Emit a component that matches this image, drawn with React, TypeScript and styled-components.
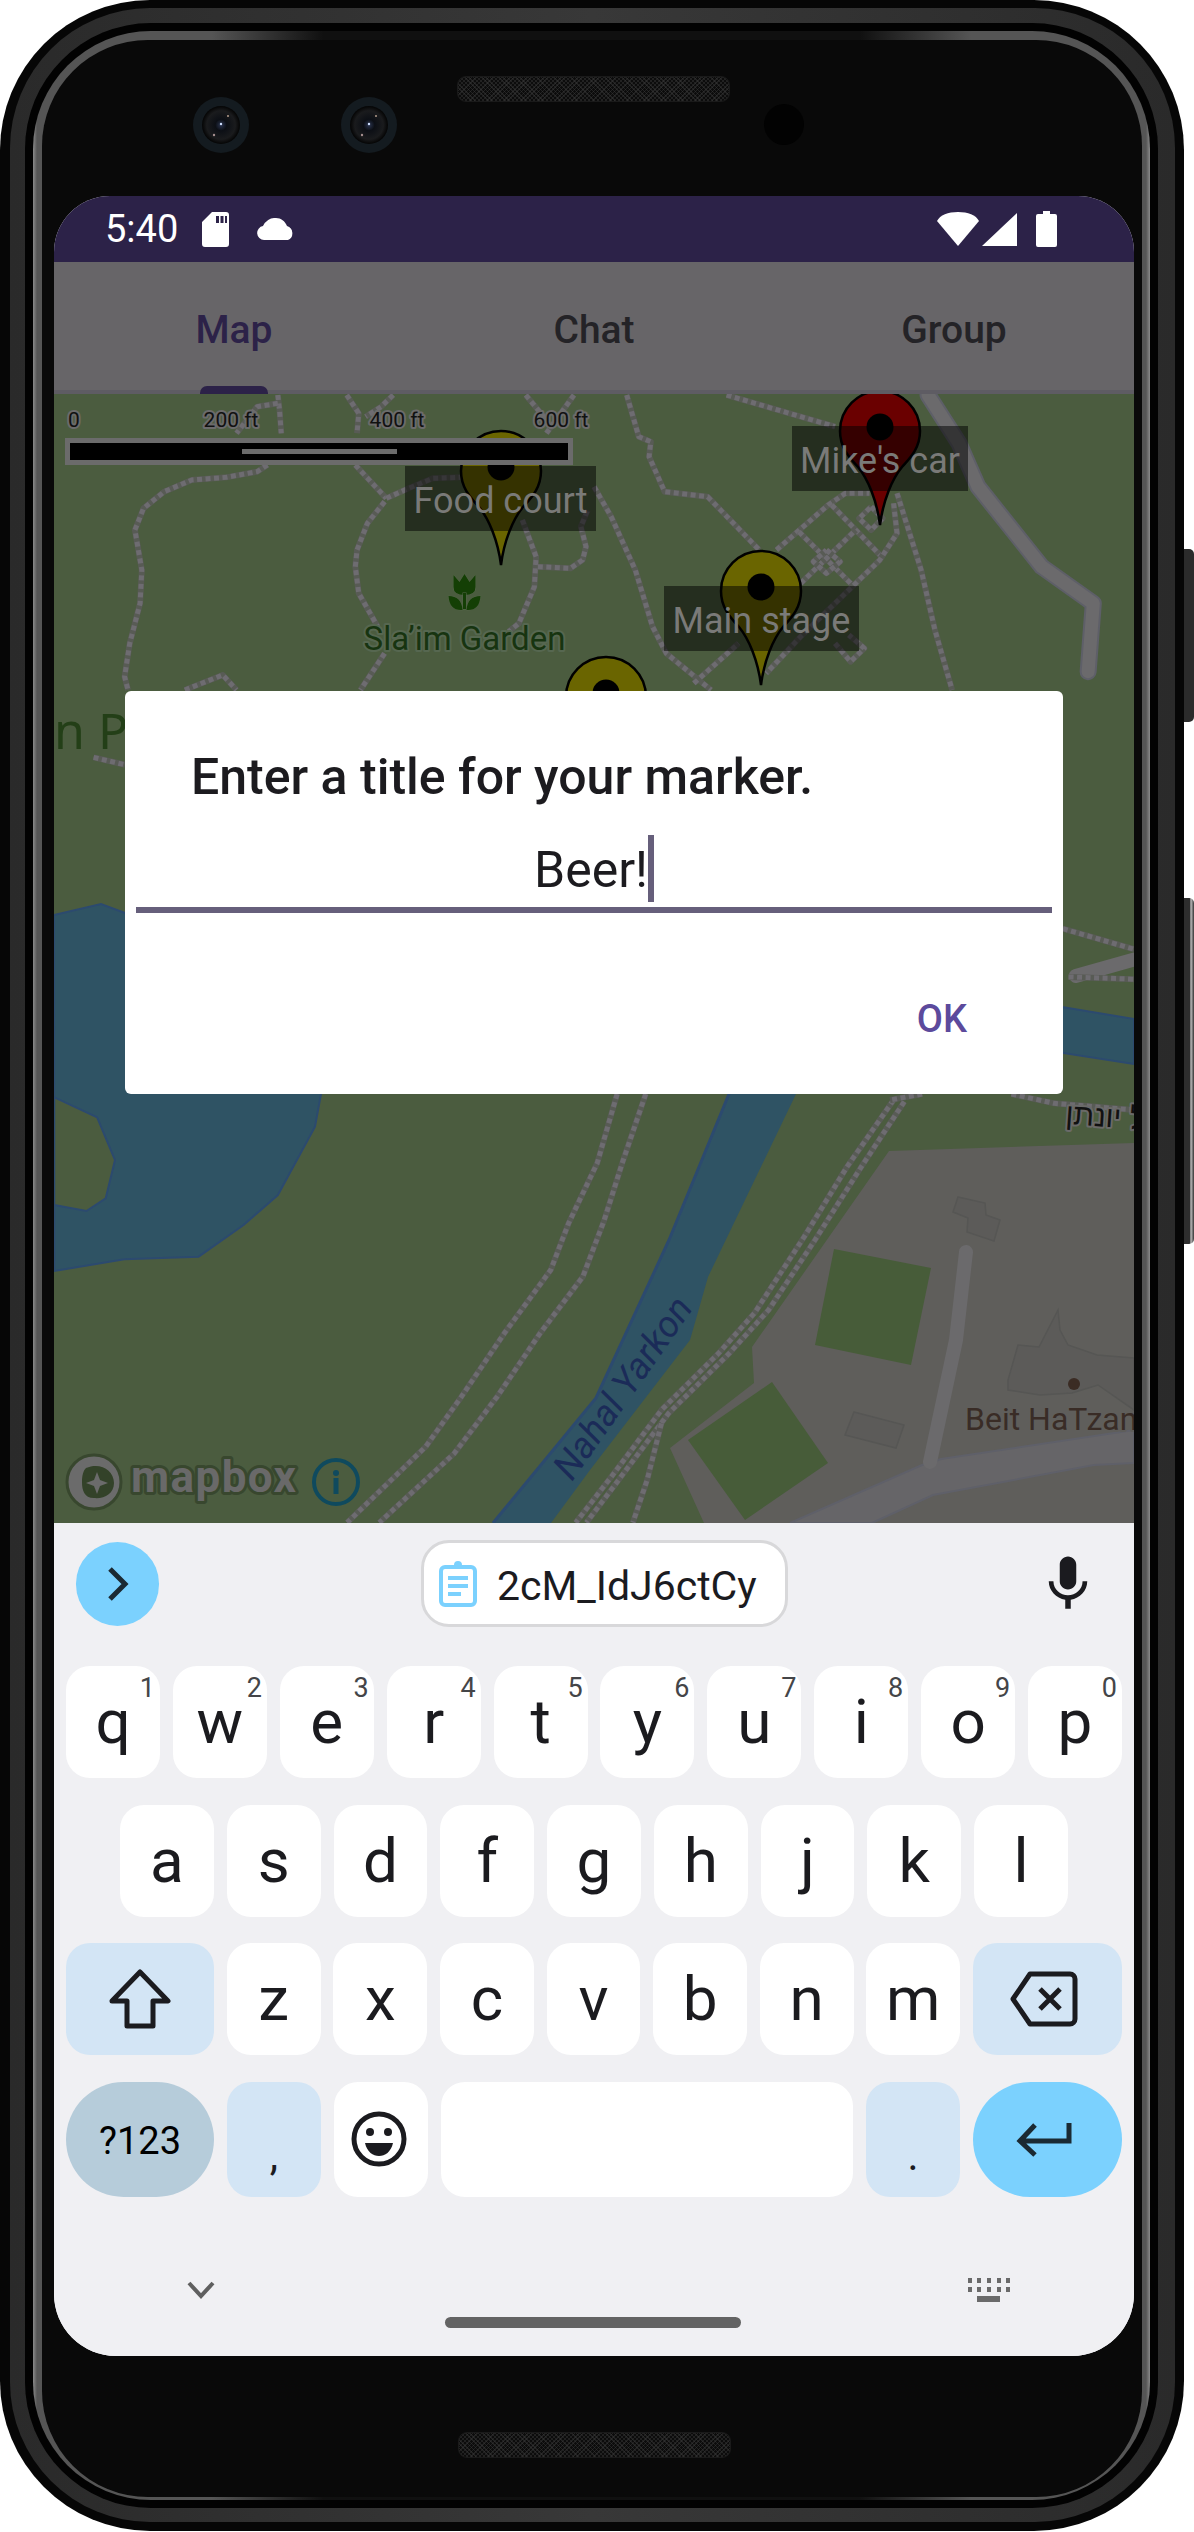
import React from "react";
import styled, { createGlobalStyle } from "styled-components";

const Global = createGlobalStyle`
  html, body { margin: 0; padding: 0; background: #fff; }
  body { font-family: Roboto, "Liberation Sans", sans-serif; overflow: hidden; }
`;

const Device = styled.div`
  position: relative;
  width: 1184px;
  height: 2531px;
`;
const Frame = styled.div`
  box-sizing: border-box;
  height: 100%;
  background: #060606;
  border-radius: 150px;
  padding: 8px 9px 9px 10px;
`;
const Band = styled.div`
  box-sizing: border-box;
  height: 100%;
  background: linear-gradient(90deg, #2a2a2a, #383838 50%, #2a2a2a);
  border-radius: 140px;
  padding: 15px 17px 14px 15px;
`;
const Groove = styled.div`
  box-sizing: border-box;
  height: 100%;
  background: #020202;
  border-radius: 126px;
  padding: 8px;
`;
const Bevel = styled.div`
  box-sizing: border-box;
  height: 100%;
  background:
    linear-gradient(90deg, transparent 16%, #101010 26%, #101010 74%, transparent 84%) top / 100% 14px no-repeat,
    linear-gradient(90deg, transparent 16%, #101010 26%, #101010 74%, transparent 84%) bottom / 100% 14px no-repeat,
    linear-gradient(90deg, #8a8a8a 0, #555 4px, #555 calc(100% - 4px), #8a8a8a 100%);
  border-radius: 118px;
  padding: 9px 8px 3px 9px;
`;
const Bezel = styled.div`
  box-sizing: border-box;
  height: 100%;
  background: #090909;
  border-radius: 106px;
  padding: 0 8px 0 12px;
  display: flex;
  flex-direction: column;
`;
const TopBezel = styled.div`
  height: 156px;
  display: flex;
  align-items: flex-start;
  padding-left: 139px;
`;
const CameraLens = styled.svg<{ $gap: number }>`
  width: 56px;
  height: 56px;
  margin-top: 57px;
  margin-left: ${(p) => p.$gap}px;
  flex: none;
`;
const Speaker = styled.div<{ $top?: number; $left?: number }>`
  width: 273px;
  height: 26px;
  box-sizing: border-box;
  flex: none;
  margin-top: ${(p) => p.$top ?? 0}px;
  margin-left: ${(p) => p.$left ?? 0}px;
  border: 1px solid #1a1a1a;
  border-radius: 9px;
  background:
    repeating-linear-gradient(45deg, rgba(60, 60, 60, 0.45) 0 1px, transparent 1px 3px),
    repeating-linear-gradient(-45deg, rgba(60, 60, 60, 0.45) 0 1px, transparent 1px 3px),
    #0c0c0c;
`;
const Sensor = styled.div`
  width: 40px;
  height: 41px;
  margin: 64px 0 0 34px;
  border-radius: 50%;
  background: #020202;
  flex: none;
`;
const BottomBezel = styled.div`
  flex: 1;
  display: flex;
  padding: 76px 0 0 404px;
`;
const SideKey = styled.div<{ $top: number; $height: number; $shine?: boolean }>`
  position: absolute;
  left: 1184px;
  top: ${(p) => p.$top}px;
  width: 10px;
  height: ${(p) => p.$height}px;
  border-radius: 0 5px 5px 0;
  background: ${(p) => (p.$shine ? "linear-gradient(90deg, #2e2e2e 0 55%, #bbb 70%, #333 100%)" : "#2b2b2b")};
`;

const Screen = styled.div`
  position: relative;
  height: 2160px;
  flex: none;
  overflow: hidden;
  border-radius: 56px 56px 62px 62px;
  display: flex;
  flex-direction: column;
  background: #f0f0f3;
`;
const StatusBar = styled.div`
  height: 66px;
  flex: none;
  background: #2c2248;
  display: flex;
  align-items: center;
  padding: 0 77px 0 51px;
  color: #fff;
`;
const Clock = styled.span`
  font-size: 38px;
  line-height: 1;
  width: 97px;
`;
const StatusSpacer = styled.div`
  flex: 1;
`;
const StatusIcon = styled.svg<{ $gap?: number }>`
  display: block;
  flex: none;
  margin-left: ${(p) => p.$gap ?? 0}px;
`;
const Tabs = styled.div`
  height: 132px;
  flex: none;
  box-sizing: border-box;
  background: #676568;
  border-bottom: 4px solid #5e5c63;
  display: grid;
  grid-template-columns: repeat(3, 1fr);
`;
const Tab = styled.div<{ $active?: boolean }>`
  position: relative;
  display: flex;
  align-items: center;
  justify-content: center;
  box-sizing: border-box;
  font-size: 39px;
  font-weight: 500;
  padding-top: 8px;
  color: ${(p) => (p.$active ? "#2c2248" : "#242327")};
`;
const TabIndicator = styled.div`
  position: absolute;
  bottom: -4px;
  left: 146px;
  width: 68px;
  height: 8px;
  border-radius: 7px 7px 0 0;
  background: #2c2248;
`;
const MapArea = styled.div`
  position: relative;
  height: 1129px;
  flex: none;
  overflow: hidden;
  background: #4b5c3f;
`;
const MapSvg = styled.svg`
  display: block;
  width: 100%;
  height: 100%;
`;
const Road = styled.polyline<{ $w: number; $c: string }>`
  fill: none;
  stroke: ${(p) => p.$c};
  stroke-width: ${(p) => p.$w}px;
  stroke-linecap: round;
  stroke-linejoin: round;
`;
const Trail = styled.polyline<{ $rim?: boolean }>`
  fill: none;
  stroke: ${(p) => (p.$rim ? "#585b55" : "#6e6c71")};
  stroke-width: ${(p) => (p.$rim ? 6 : 5)}px;
  stroke-linejoin: round;
  stroke-dasharray: ${(p) => (p.$rim ? "none" : "5 3.5")};
`;
const MapText = styled.text<{ $size: number; $fill: string; $halo?: string; $haloW?: number; $weight?: number; $italic?: boolean; $font?: string }>`
  font-family: ${(p) => p.$font ?? "Roboto"}, "Liberation Sans", sans-serif;
  font-size: ${(p) => p.$size}px;
  font-weight: ${(p) => p.$weight ?? 400};
  font-style: ${(p) => (p.$italic ? "italic" : "normal")};
  fill: ${(p) => p.$fill};
  stroke: ${(p) => p.$halo ?? "none"};
  stroke-width: ${(p) => (p.$halo ? p.$haloW ?? 4 : 0)}px;
  paint-order: stroke;
  stroke-linejoin: round;
`;
const PinLabel = styled.div<{ $x: number; $y: number; $w: number }>`
  position: absolute;
  left: ${(p) => p.$x - 54}px;
  top: ${(p) => p.$y - 394}px;
  width: ${(p) => p.$w}px;
  height: 65px;
  background: rgba(0, 0, 0, 0.5);
  color: #7a7a78;
  font-size: 36px;
  line-height: 70px;
  text-align: center;
  white-space: nowrap;
`;

const Dialog = styled.div`
  position: absolute;
  left: 71px;
  top: 495px;
  width: 938px;
  height: 403px;
  box-sizing: border-box;
  background: #fff;
  border-radius: 6px;
  padding: 58px 11px 0;
  display: flex;
  flex-direction: column;
  color: #1c1b1f;
`;
const DialogTitle = styled.div`
  font-size: 50px;
  font-weight: 500;
  line-height: 56px;
  padding-left: 55px;
`;
const TitleInput = styled.div`
  margin-top: 30px;
  height: 72px;
  border-bottom: 6px solid #665f7b;
  display: flex;
  justify-content: center;
  align-items: flex-start;
  font-size: 50px;
  line-height: 70px;
`;
const InputCursor = styled.span`
  display: block;
  width: 6px;
  height: 67px;
  background: #665f7b;
`;
const DialogActions = styled.div`
  margin-top: 83px;
  display: flex;
  justify-content: flex-end;
  padding-right: 85px;
`;
const DialogButton = styled.span`
  font-size: 38px;
  font-weight: 500;
  line-height: 46px;
  color: #5c4a9c;
`;

const Keyboard = styled.div`
  flex: 1;
  box-sizing: border-box;
  background: #f0f0f3;
  padding: 17px 12px 0;
  display: flex;
  flex-direction: column;
`;
const SuggestBar = styled.div`
  height: 87px;
  display: flex;
  align-items: center;
  margin-bottom: 39px;
  padding-left: 10px;
`;
const RoundButton = styled.div<{ $w: number; $h: number; $bg?: string }>`
  width: ${(p) => p.$w}px;
  height: ${(p) => p.$h}px;
  border-radius: 999px;
  background: ${(p) => p.$bg ?? "#7bd1fe"};
  display: flex;
  align-items: center;
  justify-content: center;
  flex: none;
`;
const Chip = styled.div`
  box-sizing: border-box;
  margin-left: 262px;
  width: 367px;
  height: 87px;
  border: 3px solid #d8d8da;
  border-radius: 28px;
  background: #fff;
  display: flex;
  align-items: center;
  padding-left: 15px;
  font-size: 41px;
  line-height: 50px;
  color: #1b1b1f;
  gap: 20px;
`;
const ChipText = styled.span`
  padding-top: 4px;
`;
const MicWrap = styled.div`
  margin-left: 247px;
  display: flex;
`;
const KeyRow = styled.div<{ $inset?: number; $h?: number }>`
  display: flex;
  gap: 12.9px;
  height: ${(p) => p.$h ?? 112}px;
  padding: 0 ${(p) => p.$inset ?? 0}px;
  margin-bottom: 26.5px;
`;
const Key = styled.div<{ $w?: number; $tone?: "plain" | "mod" }>`
  position: relative;
  flex: ${(p) => (p.$w ? `0 0 ${p.$w}px` : "1 1 0")};
  border-radius: 24px;
  background: ${(p) => (p.$tone === "mod" ? "#d3e5f5" : "#fff")};
  display: flex;
  align-items: center;
  justify-content: center;
  font-size: 62px;
  line-height: 1;
  color: #1b1b1f;
`;
const Punct = styled.span`
  font-size: 42px;
  padding-top: 34px;
`;
const SymbolLabel = styled.span`
  font-size: 38px;
  padding-top: 4px;
`;
const Hint = styled.span`
  position: absolute;
  top: 8px;
  right: 5px;
  font-size: 27px;
  line-height: 1.1;
  color: #444548;
`;
const NudgedIcon = styled.svg<{ $dx: number }>`
  margin-left: ${(p) => p.$dx}px;
`;
const NavArea = styled.div`
  flex: 1;
  position: relative;
  padding: 55px 112px 0 121px;
`;
const NavRow = styled.div`
  height: 24px;
  display: flex;
  align-items: center;
  justify-content: space-between;
`;
const HomeHandle = styled.div`
  position: absolute;
  left: 379px;
  top: 94px;
  width: 296px;
  height: 11px;
  border-radius: 6px;
  background: #636363;
`;

const z9 = (p: number[][]) => p.map(([x, y]) => `${54 + x / 2.904},${390 + y / 3}`).join(" ");
const z10 = (p: number[][]) => p.map(([x, y]) => `${594 + x / 2.904},${390 + y / 3}`).join(" ");
const z3 = (p: number[][]) => p.map(([x, y]) => `${40 + x / 1.4},${1080 + y / 3}`).join(" ");
const z2 = (p: number[][]) => p.map(([x, y]) => `${40 + x / 1.4},${380 + y / 2.178}`).join(" ");

const trails: string[] = [
  z9([[650, 15], [655, 60], [660, 130]]),
  z9([[650, 40], [590, 50], [530, 130]]),
  z9([[620, 225], [590, 245], [500, 262], [400, 270], [320, 305], [260, 355], [235, 420], [255, 540], [250, 640], [220, 760], [205, 860], [215, 900]]),
  z9([[850, 15], [885, 70], [880, 130]]),
  z9([[985, 15], [950, 50], [905, 80]]),
  z9([[875, 225], [965, 325]]),
  z9([[965, 325], [1030, 295], [1100, 265], [1180, 262]]),
  z9([[960, 335], [910, 400], [880, 480], [875, 530], [885, 610], [940, 710]]),
  z9([[1360, 390], [1400, 500], [1395, 590], [1350, 700], [1320, 725]]),
  z9([[960, 790], [890, 900]]),
  z9([[1405, 530], [1500, 535], [1535, 510], [1545, 470], [1530, 410], [1550, 360]]),
  z9([[1370, 15], [1430, 90]]),
  z9([[1510, 15], [1430, 130]]),
  z9([[380, 900], [490, 855], [530, 900]]),
  z10([[95, 15], [130, 140], [165, 155], [160, 200], [205, 305], [330, 320], [480, 480]]),
  z10([[385, 15], [700, 110]]),
  z10([[0, 290], [50, 380], [120, 540], [170, 710], [210, 790], [340, 900]]),
  z10([[530, 480], [680, 345], [730, 310], [800, 310]]),
  z10([[690, 345], [835, 500]]),
  z10([[595, 425], [750, 585]]),
  z10([[600, 580], [760, 420]]),
  z10([[870, 340], [880, 430], [830, 510], [750, 590], [600, 740], [500, 850]]),
  z10([[290, 880], [420, 760]]),
  z10([[675, 480], [715, 515], [675, 550], [637, 515], [675, 480]]),
  z10([[880, 310], [950, 540], [990, 720], [1040, 900]]),
  z10([[700, 760], [745, 815], [785, 775], [740, 735]]),
  z10([[805, 350], [838, 385], [805, 420], [770, 385], [805, 350]]),
  z3([[808, 42], [780, 250], [740, 430], [715, 570], [650, 760], [590, 950], [540, 1100], [430, 1328]]),
  z3([[848, 42], [815, 250], [790, 420], [760, 590], [700, 760], [640, 950], [580, 1120], [475, 1328]]),
  z3([[1195, 60], [1130, 260], [1070, 470], [1000, 700], [950, 820], [870, 990], [800, 1190], [750, 1328]]),
  z3([[1210, 65], [1150, 260], [1085, 480], [1020, 690], [965, 820], [880, 1000], [810, 1200], [765, 1328]]),
  z3([[870, 1030], [850, 1200], [830, 1328]]),
  z3([[1235, 42], [1190, 60]]),
  z3([[1360, 42], [1420, 70], [1532, 90]]),
  z2([[1432, 1195], [1532, 1240]]),
  z2([[1440, 1300], [1532, 1305]]),
  z2([[75, 822], [119, 838]]),
];

const PIN = "M0 -40 A40 40 0 0 1 40 0 C40 18 29 28 22 36 C12 48 3 70 0 94 C-3 70 -12 48 -22 36 C-29 28 -40 18 -40 0 A40 40 0 0 1 0 -40Z";
const pins = [
  { x: 501, y: 471, c: "#6a6500" },
  { x: 880, y: 431, c: "#6a0000" },
  { x: 761, y: 591, c: "#6a6500" },
  { x: 606, y: 697, c: "#6a6500" },
];

function MapDrawing() {
  return (
    <MapSvg viewBox="54 394 1080 1129">
      <polygon fill="#2f5364" stroke="#2c4a6f" strokeWidth="2" points={`54,915 101,904 125,913 321,1000 321,1094 ${z3([[385, 140], [333, 345], [285, 435], [222, 530], [118, 538], [20, 573]])}`} />
      <polygon fill="#4b5c3f" stroke="#2c4a6f" strokeWidth="2" points={z3([[20, 52], [80, 112], [105, 240], [92, 355], [65, 393], [20, 375]])} />
      <polygon fill="#2f5364" points="747,1050 796,1050 796,1094 708,1277 690,1340 590,1470 551,1523 493,1523 596,1398 669,1240" />
      <polyline fill="none" stroke="#2c4a6f" strokeWidth="3" points="747,1050 669,1240 596,1398 493,1523" />
      <polygon fill="#2f5364" stroke="#2c4a6f" strokeWidth="2" points="1050,1005 1134,1019 1134,1064 1050,1051" />
      <polygon fill="#5f5e5b" points="889,1151 1134,1143 1134,1523 704,1523 670,1448 754,1383 752,1347" />
      <polygon fill="#475c39" points="834,1249 931,1268 911,1365 815,1345" />
      <polygon fill="#475c39" points="772,1382 828,1463 745,1520 688,1440" />
      <polygon fill="#666568" stroke="#5f6069" strokeWidth="2" points="790,1523 922,1465 929,1463 941,1459 1134,1430 1134,1463 1094,1465 933,1495 872,1523" />
      <Road $w={14} $c="#6b6a6c" points="966,1252 956,1340 930,1462" />
      <polygon fill="#5c5b59" stroke="#565654" strokeWidth="1.5" points="854,1412 904,1425 896,1448 845,1435" />
      <polygon fill="#5c5b59" stroke="#565654" strokeWidth="1.5" points="958,1197 985,1203 986,1215 1000,1220 994,1241 967,1232 968,1218 953,1212" />
      <polygon fill="#5c5b59" stroke="#565654" strokeWidth="1.5" points="1058,1310 1060,1330 1068,1345 1097,1355 1134,1358 1134,1410 1098,1385 1072,1393 1040,1395 1008,1390 1008,1380 1018,1345 1039,1347" />
      <circle cx="1074" cy="1384" r="6" fill="#3b2c24" />
      <Road $w={17} $c="#5e5f68" points={z10([[970, 15], [1060, 160], [1115, 290], [1300, 530], [1450, 640], [1435, 845]])} />
      <Road $w={13} $c="#6b6a6c" points={z10([[970, 15], [1060, 160], [1115, 290], [1300, 530], [1450, 640], [1435, 845]])} />
      <Road $w={14} $c="#6b6a6c" points={z2([[1450, 1298], [1532, 1262]])} />
      {trails.map((t) => (
        <React.Fragment key={t}>
          <Trail $rim points={t} />
          <Trail points={t} />
        </React.Fragment>
      ))}

      <MapText x="54" y="749" $size={50} $fill="#233f17" $font="Noto Sans">n P</MapText>
      <g transform="translate(464.5 593)" fill="#143f05" stroke="#55664a" strokeWidth="1" style={{ paintOrder: "stroke" }}>
        <path d="M-11 -18 L-5 -11 L0 -19 L5 -11 L11 -18 V-6 Q11 2 0 2 Q-11 2 -11 -6Z" />
        <rect x="-1.5" y="0" width="3" height="16" />
        <path d="M-16 3 Q-3 3 -2 17 Q-15 18 -16 3Z" />
        <path d="M16 3 Q3 3 2 17 Q15 18 16 3Z" />
      </g>
      <MapText x="464.5" y="650" textAnchor="middle" $size={33} $fill="#173410" $halo="#566750">Sla’im Garden</MapText>

      <MapText transform="translate(1065 1124) rotate(4)" $size={30} $fill="#111" $halo="#6a6a68" $font="Liberation Sans">ל יונתן</MapText>
      <MapText transform="translate(572 1482) rotate(-55)" $size={37} $fill="#1b2b58" $italic>Nahal Yarkon</MapText>
      <MapText x="965" y="1430" $size={32} $fill="#392c26" $halo="#5f5e5b">Beit HaTzan</MapText>

      {pins.map((p) => (
        <g key={p.x} transform={`translate(${p.x} ${p.y})`}>
          <path d={PIN} fill={p.c} stroke="#000" strokeWidth="2.5" />
          <circle cy="-4" r="13.5" fill="#000" />
        </g>
      ))}

      <rect x="65" y="438" width="508" height="27" fill="#6b6b6b" />
      <rect x="70" y="443" width="498" height="17" fill="#000" />
      <rect x="242" y="449" width="155" height="5" fill="#6b6b6b" />
      <MapText x="74" y="427" textAnchor="middle" $size={21} $fill="#111" $halo="#6b6b6b">0</MapText>
      <MapText x="231" y="427" textAnchor="middle" $size={21} $fill="#111" $halo="#6b6b6b">200 ft</MapText>
      <MapText x="397" y="427" textAnchor="middle" $size={21} $fill="#111" $halo="#6b6b6b">400 ft</MapText>
      <MapText x="561" y="427" textAnchor="middle" $size={21} $fill="#111" $halo="#6b6b6b">600 ft</MapText>

      <circle cx="94" cy="1482" r="27" fill="#6b6b6b" stroke="#38472e" strokeWidth="3" />
      <path d="M86 1468 C100 1462 114 1470 114 1483 C114 1494 104 1499 94 1498 C84 1498 82 1490 82 1482 C82 1476 83 1471 86 1468Z" fill="#334229" />
      <path d="M97 1472 L100 1480 L108 1483 L100 1486 L97 1494 L94 1486 L86 1483 L94 1480Z" fill="#6b6b6b" />
      <MapText x="131" y="1492" textLength={165} $size={44} $weight={700} $fill="#696969" $halo="#38472e" $haloW={6}>mapbox</MapText>
      <circle cx="336" cy="1482" r="22" fill="none" stroke="#0f4a5e" strokeWidth="4" />
      <rect x="333.5" y="1478" width="5" height="16" fill="#0f4a5e" />
      <circle cx="336" cy="1473" r="3" fill="#0f4a5e" />
    </MapSvg>
  );
}

const row1: [string, string][] = [["q", "1"], ["w", "2"], ["e", "3"], ["r", "4"], ["t", "5"], ["y", "6"], ["u", "7"], ["i", "8"], ["o", "9"], ["p", "0"]];
const row2 = ["a", "s", "d", "f", "g", "h", "j", "k", "l"];
const row3 = ["z", "x", "c", "v", "b", "n", "m"];

function Lens() {
  return (
    <>
      <defs>
        <radialGradient id="lensGlass" cx="50%" cy="50%" r="50%">
          <stop offset="0" stopColor="#2b3550" />
          <stop offset="0.3" stopColor="#0c0f15" />
          <stop offset="0.75" stopColor="#1a1b1d" />
          <stop offset="1" stopColor="#040404" />
        </radialGradient>
      </defs>
      <circle cx="28" cy="28" r="28" fill="#141b20" />
      <circle cx="28" cy="28" r="19" fill="url(#lensGlass)" />
      <circle cx="28" cy="27" r="1.2" fill="#cfe0ff" />
      <circle cx="35" cy="19" r="1" fill="#b59c8c" />
      <circle cx="21" cy="38" r="1.2" fill="#a58f8f" />
    </>
  );
}

export default function App() {
  return (
    <>
      <Global />
      <Device>
        <Frame>
          <Band>
            <Groove>
              <Bevel>
                <Bezel>
                  <TopBezel>
                    <CameraLens $gap={0} viewBox="0 0 56 56"><Lens /></CameraLens>
                    <CameraLens $gap={92} viewBox="0 0 56 56"><Lens /></CameraLens>
                    <Speaker $top={36} $left={60} />
                    <Sensor />
                  </TopBezel>
                  <Screen>
                    <StatusBar>
                      <Clock>5:40</Clock>
                      <StatusIcon width="27" height="35" viewBox="0 0 27 35">
                        <path fillRule="evenodd" fill="#fff" d="M10 0H24a3 3 0 0 1 3 3V32a3 3 0 0 1-3 3H3a3 3 0 0 1-3-3V10ZM14 4V11H17V4ZM18.5 4V11H21.5V4ZM23 4V11H25V4Z" />
                      </StatusIcon>
                      <StatusIcon $gap={28} width="38" height="22" viewBox="0 0 38 22">
                        <path fill="#fff" d="M7 22a7 7 0 0 1-1-13.9A13 13 0 0 1 19 0c5 0 9 3 11 8a7.5 7.5 0 0 1 1 14Z" />
                      </StatusIcon>
                      <StatusSpacer />
                      <StatusIcon width="42" height="34" viewBox="0 0 42 34">
                        <path fill="#fff" d="M21 34 0 9C3 3 11 0 21 0s18 3 21 9Z" />
                      </StatusIcon>
                      <StatusIcon $gap={3} width="35" height="33" viewBox="0 0 35 33">
                        <path fill="#fff" d="M35 0V33H0Z" />
                      </StatusIcon>
                      <StatusIcon $gap={19} width="21" height="36" viewBox="0 0 21 36">
                        <path fill="#fff" d="M7 0H14V3H19a2 2 0 0 1 2 2V34a2 2 0 0 1-2 2H2a2 2 0 0 1-2-2V5a2 2 0 0 1 2-2H7Z" />
                      </StatusIcon>
                    </StatusBar>
                    <Tabs>
                      <Tab $active>Map<TabIndicator /></Tab>
                      <Tab>Chat</Tab>
                      <Tab>Group</Tab>
                    </Tabs>
                    <MapArea>
                      <MapDrawing />
                      <PinLabel $x={405} $y={466} $w={191}>Food court</PinLabel>
                      <PinLabel $x={792} $y={426} $w={176}>Mike's car</PinLabel>
                      <PinLabel $x={664} $y={586} $w={195}>Main stage</PinLabel>
                    </MapArea>
                    <Keyboard>
                      <SuggestBar>
                        <RoundButton $w={83} $h={84}>
                          <svg width="24" height="36" viewBox="0 0 24 36" fill="none" stroke="#1b2a33" strokeWidth="5"><path d="M4 3 19 18 4 33" /></svg>
                        </RoundButton>
                        <Chip>
                          <svg width="38" height="46" viewBox="0 0 38 46" fill="none">
                            <rect x="2" y="6" width="34" height="38" rx="4" stroke="#7bd1fe" strokeWidth="4" fill="#fff" />
                            <path d="M11 8V4H15a4 4 0 0 1 8 0H27V8Z" fill="#7bd1fe" />
                            <path d="M9 17H29M9 25H29M9 33H22" stroke="#7bd1fe" strokeWidth="4" />
                          </svg>
                          <ChipText>2cM_IdJ6ctCy</ChipText>
                        </Chip>
                        <MicWrap>
                          <svg width="66" height="66" viewBox="0 0 24 24" fill="#1b1b1f">
                            <path d="M12 14c1.66 0 3-1.34 3-3V5c0-1.66-1.34-3-3-3S9 3.34 9 5v6c0 1.66 1.34 3 3 3zm5.3-3c0 3-2.54 5.1-5.3 5.1S6.7 14 6.7 11H5c0 3.41 2.72 6.23 6 6.72V21h2v-3.28c3.28-.48 6-3.3 6-6.72h-1.7z" />
                          </svg>
                        </MicWrap>
                      </SuggestBar>
                      <KeyRow>
                        {row1.map(([k, n]) => (
                          <Key key={k}>{k}<Hint>{n}</Hint></Key>
                        ))}
                      </KeyRow>
                      <KeyRow $inset={54}>
                        {row2.map((k) => <Key key={k}>{k}</Key>)}
                      </KeyRow>
                      <KeyRow>
                        <Key $w={148} $tone="mod">
                          <svg width="62" height="60" viewBox="0 0 62 60" fill="none" stroke="#1b1b1f" strokeWidth="5" strokeLinejoin="round"><path d="M31 3 59 32H44V57H18V32H3Z" /></svg>
                        </Key>
                        {row3.map((k) => <Key key={k}>{k}</Key>)}
                        <Key $w={149} $tone="mod">
                          <NudgedIcon $dx={-8} width="68" height="56" viewBox="0 0 68 56" fill="none" stroke="#1b1b1f" strokeWidth="5" strokeLinejoin="round"><path d="M20 3H60a5 5 0 0 1 5 5V48a5 5 0 0 1-5 5H20L3 28Z" /><path d="M30 18 50 38M50 18 30 38" /></NudgedIcon>
                        </Key>
                      </KeyRow>
                      <KeyRow $h={115}>
                        <RoundButton $w={148} $h={115} $bg="#b6ccda"><SymbolLabel>?123</SymbolLabel></RoundButton>
                        <Key $w={94} $tone="mod"><Punct>,</Punct></Key>
                        <Key $w={94}>
                          <NudgedIcon $dx={-3} width="56" height="56" viewBox="0 0 56 56" fill="none">
                            <circle cx="28" cy="28" r="25" stroke="#1b1b1f" strokeWidth="5" />
                            <circle cx="19" cy="21" r="4" fill="#1b1b1f" />
                            <circle cx="37" cy="21" r="4" fill="#1b1b1f" />
                            <path d="M14 32H42C40 41 34 45 28 45S16 41 14 32Z" fill="#1b1b1f" />
                          </NudgedIcon>
                        </Key>
                        <Key />
                        <Key $w={94} $tone="mod"><Punct>.</Punct></Key>
                        <RoundButton $w={149} $h={115}>
                          <NudgedIcon $dx={-8} width="56" height="36" viewBox="0 0 56 36" fill="none" stroke="#1b2a33" strokeWidth="5"><path d="M53 2V20H6M19 4 4 20 19 34" /></NudgedIcon>
                        </RoundButton>
                      </KeyRow>
                      <NavArea>
                        <NavRow>
                          <svg width="28" height="18" viewBox="0 0 28 18" fill="none" stroke="#5f5f5f" strokeWidth="4"><path d="M2 2 14 15 26 2" /></svg>
                          <svg width="42" height="24" viewBox="0 0 42 24" fill="#6a6a6a">
                            <path d="M0 0h4v5H0zM9 0h4v5H9zM19 0h4v5h-4zM29 0h4v5h-4zM38 0h4v5h-4zM0 9h4v5H0zM9 9h4v5H9zM19 9h4v5h-4zM29 9h4v5h-4zM38 9h4v5h-4zM9 18h23v6H9z" />
                          </svg>
                        </NavRow>
                        <HomeHandle />
                      </NavArea>
                    </Keyboard>
                    <Dialog>
                      <DialogTitle>Enter a title for your marker.</DialogTitle>
                      <TitleInput>Beer!<InputCursor /></TitleInput>
                      <DialogActions><DialogButton>OK</DialogButton></DialogActions>
                    </Dialog>
                  </Screen>
                  <BottomBezel><Speaker /></BottomBezel>
                </Bezel>
              </Bevel>
            </Groove>
          </Band>
        </Frame>
        <SideKey $top={549} $height={173} />
        <SideKey $top={898} $height={346} $shine />
      </Device>
    </>
  );
}
